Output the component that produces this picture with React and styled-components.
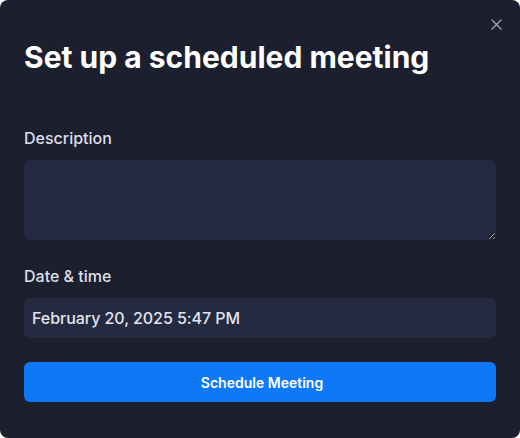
import styled, { createGlobalStyle } from "styled-components";

const GlobalStyle = createGlobalStyle`
  html, body {
    margin: 0;
    padding: 0;
    background: #ffffff;
  }
  body {
    font-family: Inter, "Noto Sans", sans-serif;
  }
`;

const Dialog = styled.div`
  position: relative;
  box-sizing: border-box;
  width: 520px;
  height: 438px;
  background: #1c1f2e;
  border-radius: 8px;
  padding: 39px 24px 36px;
  display: flex;
  flex-direction: column;
  color: #ffffff;
`;

const CloseButton = styled.button`
  position: absolute;
  top: 17px;
  right: 17px;
  width: 14px;
  height: 14px;
  padding: 0;
  border: none;
  background: transparent;
  color: #a3a8b8;
  display: flex;
  align-items: center;
  justify-content: center;
  cursor: pointer;
`;

const Title = styled.h2`
  margin: 0 0 51px;
  font-size: 30px;
  line-height: 36px;
  font-weight: 700;
  color: #ffffff;
`;

const Field = styled.div`
  display: flex;
  flex-direction: column;
  gap: 10px;
  margin-bottom: 24px;
`;

const Label = styled.label`
  font-size: 16px;
  line-height: 24px;
  font-weight: 500;
  color: #dcdfea;
`;

const TextArea = styled.textarea`
  box-sizing: border-box;
  width: 100%;
  height: 80px;
  border: none;
  outline: none;
  border-radius: 6px;
  background: #252a41;
  color: #e2e5ee;
  padding: 8px;
  font: inherit;
  font-size: 16px;
  color-scheme: dark;
`;

const DateBox = styled.div`
  box-sizing: border-box;
  height: 40px;
  border-radius: 6px;
  background: #252a41;
  padding: 0 8px;
  display: flex;
  align-items: center;
  font-size: 16px;
  font-weight: 500;
  letter-spacing: -0.05px;
  color: #e2e5ee;
`;

const PrimaryButton = styled.button`
  height: 40px;
  width: 100%;
  border: none;
  border-radius: 6px;
  background: #0e78f9;
  color: #ffffff;
  font-family: inherit;
  font-size: 14px;
  font-weight: 600;
  padding: 0 0 0 4px;
  cursor: pointer;
`;

export default function App() {
  return (
    <>
      <GlobalStyle />
      <Dialog>
        <CloseButton aria-label="Close">
          <svg width="11" height="11" viewBox="0 0 11 11" fill="none">
            <path d="M1 1L10 10M10 1L1 10" stroke="currentColor" strokeWidth="1.3" strokeLinecap="round" />
          </svg>
        </CloseButton>
        <Title>Set up a scheduled meeting</Title>
        <Field>
          <Label>Description</Label>
          <TextArea />
        </Field>
        <Field>
          <Label>Date &amp; time</Label>
          <DateBox>February 20, 2025 5:47 PM</DateBox>
        </Field>
        <PrimaryButton>Schedule Meeting</PrimaryButton>
      </Dialog>
    </>
  );
}
